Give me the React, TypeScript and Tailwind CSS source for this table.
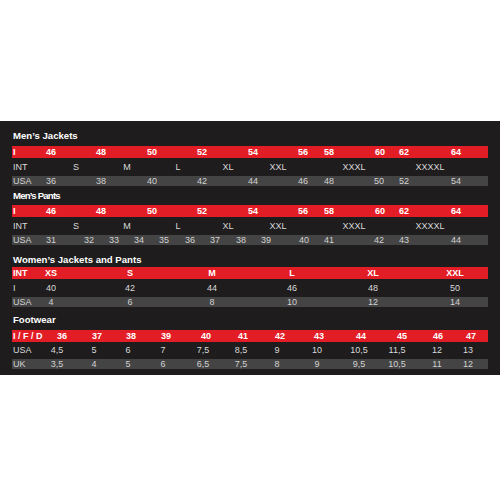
import React from "react";

type Cell = [string, number];

type RowProps = {
  label: string;
  cells: Cell[];
  tone: "red" | "dark" | "gray";
  height: string;
};

// each value is centred on its x position (page pixels), the table starts at x=12
function SizeRow({ label, cells, tone, height }: RowProps) {
  const cols: string[] = [];
  let prev = 12;
  cells.forEach(([, x]) => {
    cols.push(`${x - prev}px`, "0px");
    prev = x;
  });
  cols.push("1fr");

  const toneClass =
    tone === "red"
      ? "bg-[#e31d25] font-bold text-white"
      : tone === "gray"
        ? "bg-[#444444] text-[#d2d2d2]"
        : "text-[#dadada]";

  return (
    <div
      className={`grid items-center text-[9px] leading-none ${height} ${toneClass}`}
      style={{ gridTemplateColumns: cols.join(" ") }}
    >
      <div className="col-start-1 row-start-1 whitespace-nowrap pl-px">{label}</div>
      {cells.map(([v, x], i) => (
        <div
          key={v + x}
          className="row-start-1 flex w-0 justify-center whitespace-nowrap"
          style={{ gridColumn: i * 2 + 2 }}
        >
          {v}
        </div>
      ))}
    </div>
  );
}

const eu: Cell[] = [
  ["46", 51],
  ["48", 101],
  ["50", 152],
  ["52", 202],
  ["54", 253],
  ["56", 303],
  ["58", 329],
  ["60", 380],
  ["62", 404],
  ["64", 456],
];

const intl: Cell[] = [
  ["S", 76],
  ["M", 127],
  ["L", 178],
  ["XL", 228],
  ["XXL", 278],
  ["XXXL", 354],
  ["XXXXL", 430],
];

const jacketUsa: Cell[] = [
  ["36", 51],
  ["38", 101],
  ["40", 152],
  ["42", 202],
  ["44", 253],
  ["46", 303],
  ["48", 329],
  ["50", 379],
  ["52", 404],
  ["54", 456],
];

const pantsUsa: Cell[] = [
  ["31", 51],
  ["32", 89],
  ["33", 114],
  ["34", 139],
  ["35", 164],
  ["36", 190],
  ["37", 215],
  ["38", 241],
  ["39", 266],
  ["40", 304],
  ["41", 329],
  ["42", 379],
  ["43", 404],
  ["44", 456],
];

const womenX = [51, 130, 212, 292, 373, 455];
const womenInt: Cell[] = ["XS", "S", "M", "L", "XL", "XXL"].map((v, i) => [v, womenX[i]]);
const womenI: Cell[] = ["40", "42", "44", "46", "48", "50"].map((v, i) => [v, womenX[i]]);
const womenUsa: Cell[] = ["4", "6", "8", "10", "12", "14"].map((v, i) => [v, womenX[i]]);

const shoeX = [62, 97, 131, 166, 206, 243, 280, 319, 361, 402, 438, 471];
const dataX = [57, 94, 128, 163, 203, 241, 277, 317, 359, 397, 437, 468];
const shoeEu: Cell[] = ["36", "37", "38", "39", "40", "41", "42", "43", "44", "45", "46", "47"].map(
  (v, i) => [v, shoeX[i]]
);
const shoeUsa: Cell[] = ["4,5", "5", "6", "7", "7,5", "8,5", "9", "10", "10,5", "11,5", "12", "13"].map(
  (v, i) => [v, dataX[i]]
);
const shoeUk: Cell[] = ["3,5", "4", "5", "6", "6,5", "7,5", "8", "9", "9,5", "10,5", "11", "12"].map(
  (v, i) => [v, dataX[i]]
);

function Title({ children, className = "" }: { children: React.ReactNode; className?: string }) {
  return (
    <h2 className={`pl-px text-[9.6px] font-bold leading-[12px] text-white ${className}`}>{children}</h2>
  );
}

export default function App() {
  return (
    <div className="h-[500px] w-[500px] bg-white font-['Liberation_Sans',Arial,sans-serif]">
      <div className="h-[121px]" />
      <section className="flex h-[254px] flex-col bg-[#1e1c1d] px-3 pt-[9px]">
        {/* Men's jackets */}
        <Title className="mb-1">Men’s Jackets</Title>
        <SizeRow label="I" cells={eu} tone="red" height="h-3" />
        <SizeRow label="INT" cells={intl} tone="dark" height="h-[18px]" />
        <SizeRow label="USA" cells={jacketUsa} tone="gray" height="h-[10px]" />

        {/* Men's pants */}
        <Title className="mt-1 mb-[3px] tracking-[-0.8px]">Men’s Pants</Title>
        <SizeRow label="I" cells={eu} tone="red" height="h-3" />
        <SizeRow label="INT" cells={intl} tone="dark" height="h-[18px]" />
        <SizeRow label="USA" cells={pantsUsa} tone="gray" height="h-[10px]" />

        {/* Women */}
        <Title className="mt-[9px] mb-px">Women’s Jackets and Pants</Title>
        <SizeRow label="INT" cells={womenInt} tone="red" height="h-3" />
        <SizeRow label="I" cells={womenI} tone="dark" height="h-[18px]" />
        <SizeRow label="USA" cells={womenUsa} tone="gray" height="h-[10px]" />

        {/* Footwear */}
        <Title className="mt-[7px] mb-1">Footwear</Title>
        <SizeRow label="I / F / D" cells={shoeEu} tone="red" height="h-3" />
        <SizeRow label="USA" cells={shoeUsa} tone="dark" height="h-[17px]" />
        <SizeRow label="UK" cells={shoeUk} tone="gray" height="h-[10px]" />
      </section>
    </div>
  );
}
